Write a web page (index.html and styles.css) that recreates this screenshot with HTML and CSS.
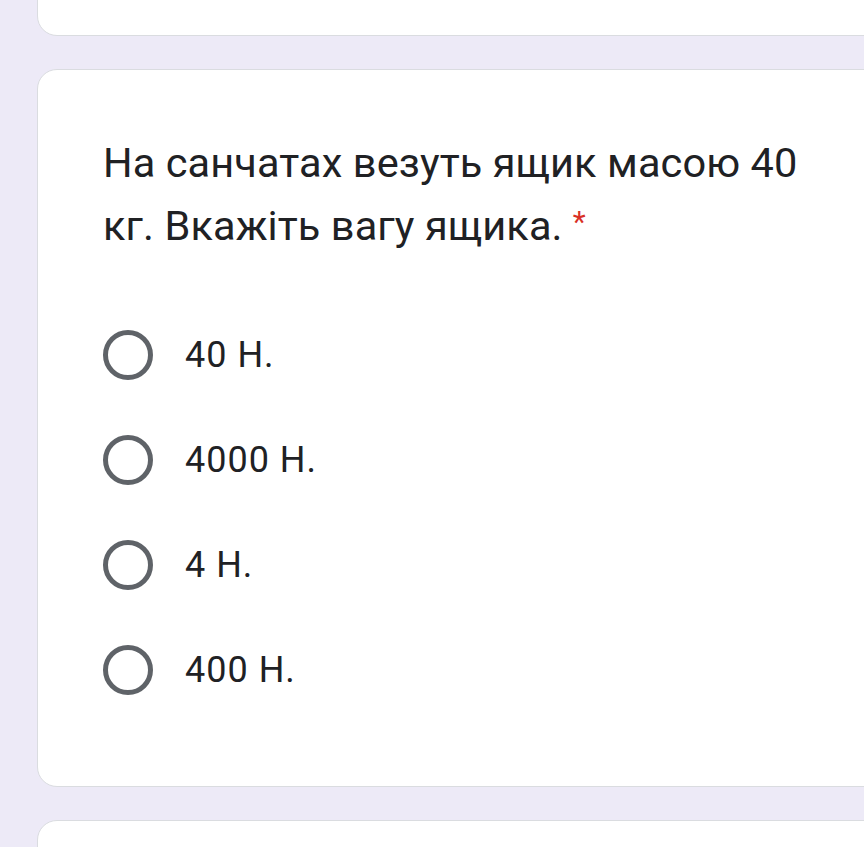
FILE: index.html
```html
<!DOCTYPE html>
<html lang="uk">
<head>
<meta charset="utf-8">
<title>Питання</title>
<link rel="stylesheet" href="styles.css">
</head>
<body>
<div class="page">
  <div class="card card-prev"></div>
  <div class="card card-question">
    <div class="title">На санчатах везуть ящик масою 40 кг. Вкажіть вагу ящика.<span class="req">*</span></div>
    <div class="options">
      <label class="option"><span class="radio"></span><span class="opt-text">40 Н.</span></label>
      <label class="option"><span class="radio"></span><span class="opt-text">4000 Н.</span></label>
      <label class="option"><span class="radio"></span><span class="opt-text">4 Н.</span></label>
      <label class="option"><span class="radio"></span><span class="opt-text">400 Н.</span></label>
    </div>
  </div>
  <div class="card card-next"></div>
</div>
</body>
</html>
```
FILE: styles.css
```css
html, body {
  margin: 0;
  padding: 0;
}
body {
  background: #edeaf7;
  overflow: hidden;
  height: 847px;
  font-family: Roboto, "Noto Sans", Arial, sans-serif;
  color: #202124;
}
.page {
  display: flex;
  flex-direction: column;
  gap: 33px;
  margin-top: -100px;
  margin-left: 37px;
  margin-right: -60px;
}
.card {
  background: #fff;
  border: 1px solid #dadce0;
  border-radius: 20px;
  box-sizing: border-box;
}
.card-prev {
  height: 136px;
}
.card-next {
  height: 120px;
}
.card-question {
  padding: 61px 0 64px 65px;
}
.title {
  font-size: 41.5px;
  line-height: 63px;
  width: 710px;
  letter-spacing: 0.1px;
}
.req {
  color: #d93025;
  padding-left: 10px;
  font-size: 30px;
  vertical-align: 8px;
  line-height: 1;
}
.options {
  display: flex;
  flex-direction: column;
  margin-top: 45px;
}
.option {
  display: flex;
  align-items: center;
  height: 105px;
}
.radio {
  width: 50px;
  height: 50px;
  border: 5px solid #5f6368;
  border-radius: 50%;
  box-sizing: border-box;
  flex: none;
}
.opt-text {
  margin-left: 32px;
  font-size: 36px;
  letter-spacing: 1px;
  color: #202124;
}
```
